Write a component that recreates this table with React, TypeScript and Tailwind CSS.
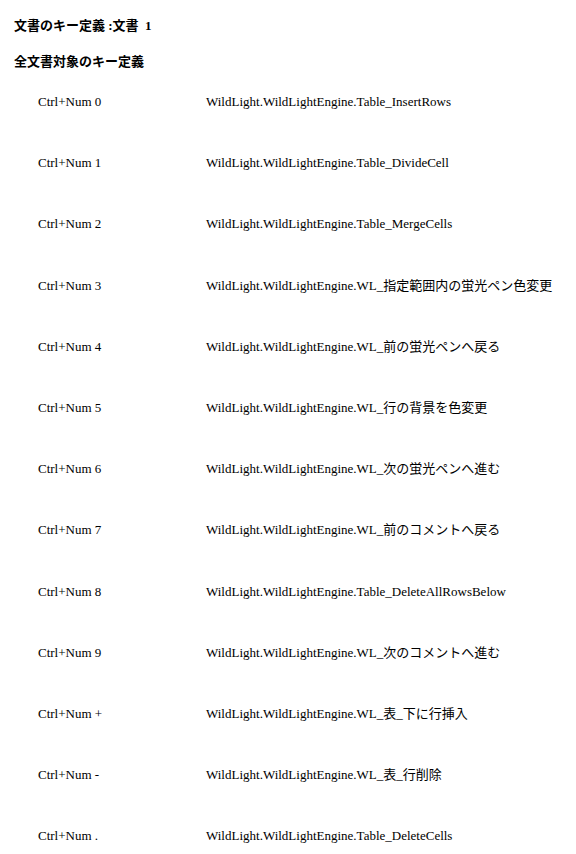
const rows: [string, string][] = [
  ["Ctrl+Num 0", "WildLight.WildLightEngine.Table_InsertRows"],
  ["Ctrl+Num 1", "WildLight.WildLightEngine.Table_DivideCell"],
  ["Ctrl+Num 2", "WildLight.WildLightEngine.Table_MergeCells"],
  ["Ctrl+Num 3", "WildLight.WildLightEngine.WL_指定範囲内の蛍光ペン色変更"],
  ["Ctrl+Num 4", "WildLight.WildLightEngine.WL_前の蛍光ペンへ戻る"],
  ["Ctrl+Num 5", "WildLight.WildLightEngine.WL_行の背景を色変更"],
  ["Ctrl+Num 6", "WildLight.WildLightEngine.WL_次の蛍光ペンへ進む"],
  ["Ctrl+Num 7", "WildLight.WildLightEngine.WL_前のコメントへ戻る"],
  ["Ctrl+Num 8", "WildLight.WildLightEngine.Table_DeleteAllRowsBelow"],
  ["Ctrl+Num 9", "WildLight.WildLightEngine.WL_次のコメントへ進む"],
  ["Ctrl+Num +", "WildLight.WildLightEngine.WL_表_下に行挿入"],
  ["Ctrl+Num -", "WildLight.WildLightEngine.WL_表_行削除"],
  ["Ctrl+Num .", "WildLight.WildLightEngine.Table_DeleteCells"],
];

export default function App() {
  return (
    <div className="min-h-[854px] bg-white text-black font-['Liberation_Serif','Noto_Sans_CJK_JP',serif]">
      <div className="px-[14px] pt-[18px]">
        <h1 className="text-[13px] font-bold leading-[16px]">
          文書のキー定義 :文書&nbsp;&nbsp;1
        </h1>
        <h2 className="mt-[20px] text-[13px] font-bold leading-[16px]">
          全文書対象のキー定義
        </h2>
      </div>
      <div className="mt-[24px] flex flex-col gap-[45.2px]">
        {rows.map(([key, command]) => (
          <div key={key} className="flex text-[13px] leading-[16px]">
            <div className="w-[206px] pl-[38px]">{key}</div>
            <div>{command}</div>
          </div>
        ))}
      </div>
    </div>
  );
}
